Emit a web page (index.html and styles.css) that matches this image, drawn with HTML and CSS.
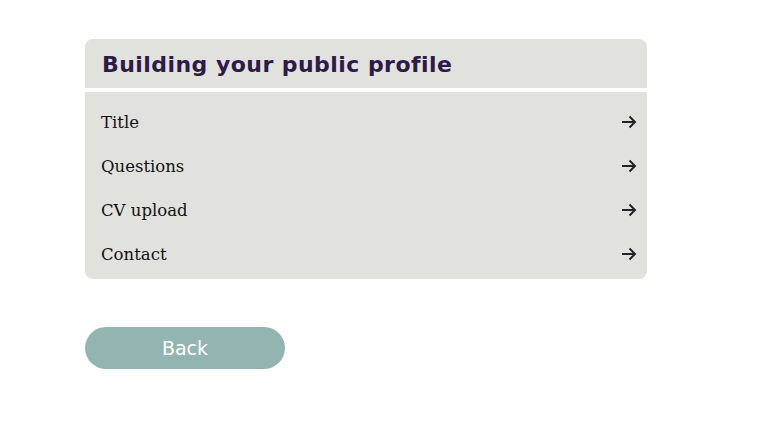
FILE: index.html
```html
<!DOCTYPE html>
<html lang="en">
<head>
<meta charset="utf-8">
<title>Building your public profile</title>
<link rel="stylesheet" href="styles.css">
</head>
<body>
<main class="page">
  <section class="card">
    <h2 class="card-title">Building your public profile</h2>
    <ul class="steps">
      <li class="step"><span>Title</span><svg class="arrow" viewBox="0 0 16 14" width="16" height="14"><path d="M1 7H14M8.5 1.5L14 7L8.5 12.5" fill="none" stroke="#1f2428" stroke-width="2"/></svg></li>
      <li class="step"><span>Questions</span><svg class="arrow" viewBox="0 0 16 14" width="16" height="14"><path d="M1 7H14M8.5 1.5L14 7L8.5 12.5" fill="none" stroke="#1f2428" stroke-width="2"/></svg></li>
      <li class="step"><span>CV upload</span><svg class="arrow" viewBox="0 0 16 14" width="16" height="14"><path d="M1 7H14M8.5 1.5L14 7L8.5 12.5" fill="none" stroke="#1f2428" stroke-width="2"/></svg></li>
      <li class="step"><span>Contact</span><svg class="arrow" viewBox="0 0 16 14" width="16" height="14"><path d="M1 7H14M8.5 1.5L14 7L8.5 12.5" fill="none" stroke="#1f2428" stroke-width="2"/></svg></li>
    </ul>
  </section>
  <button class="back" type="button">Back</button>
</main>
</body>
</html>
```
FILE: styles.css
```css
html, body {
  margin: 0;
  padding: 0;
  background: #ffffff;
}
.page {
  padding: 39px 0 0 85px;
}
.card {
  width: 562px;
  border-radius: 8px;
  overflow: hidden;
  background: #e1e1de;
}
.card-title {
  margin: 0;
  box-sizing: content-box;
  height: 38px;
  padding: 11px 0 0 17px;
  font-family: "DejaVu Sans", sans-serif;
  font-weight: 700;
  font-size: 22px;
  line-height: 30px;
  letter-spacing: 0.45px;
  color: #2d1a47;
  border-bottom: 4px solid #ffffff;
}
.steps {
  list-style: none;
  margin: 0;
  padding: 8px 0 3px 0;
}
.step {
  height: 44px;
  display: flex;
  align-items: center;
  justify-content: space-between;
  padding: 0 10px 0 16px;
  font-family: "DejaVu Serif", serif;
  font-size: 16.5px;
  color: #111111;
}
.arrow {
  display: block;
}
.back {
  display: block;
  margin-top: 48px;
  width: 200px;
  height: 42px;
  border: none;
  border-radius: 21px;
  background: #93b5b1;
  color: #ffffff;
  font-family: "DejaVu Sans", sans-serif;
  font-size: 19px;
  font-weight: 400;
  cursor: pointer;
}
```
